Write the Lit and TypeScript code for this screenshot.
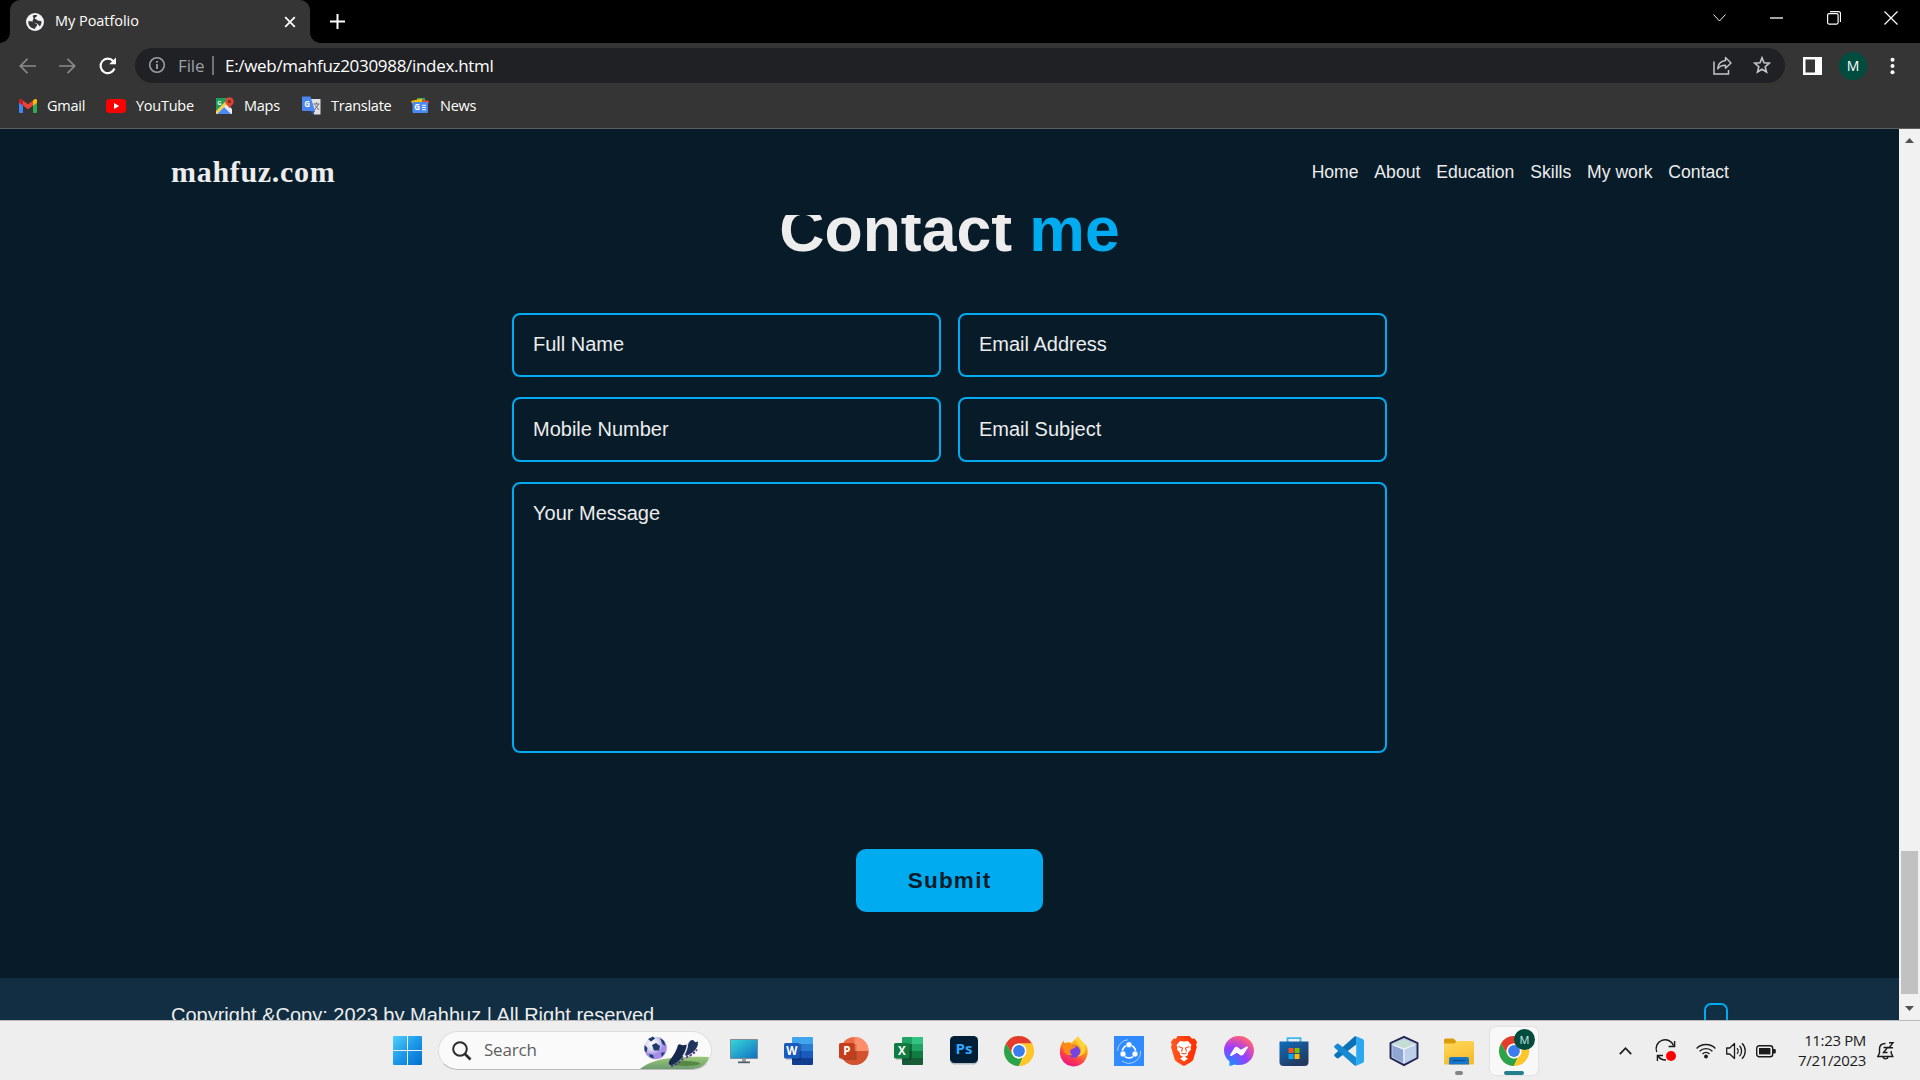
import { LitElement, html, css, svg } from "lit";
import { customElement } from "lit/decorators.js";

const chrome = svg`
  <circle cx="15" cy="15" r="15" fill="#ffcd40"/>
  <path d="M2 7.5A15 15 0 0 1 28 7.5H15A7.5 7.5 0 0 0 8.5 18.75Z" fill="#e33b2e"/>
  <path d="M2 7.5 8.5 18.75A7.5 7.5 0 0 0 18.5 21.6L14.8 30A15 15 0 0 1 2 7.5Z" fill="#2ba24c"/>
  <path d="M28 7.5A15 15 0 0 1 14.8 30L21.5 18.75A7.5 7.5 0 0 0 15 7.5Z" fill="#ffc629"/>
  <circle cx="15" cy="15" r="7.5" fill="#fff"/><circle cx="15" cy="15" r="5.9" fill="#3b7ded"/>`;

const office = (kind: string) => {
  const c = kind === "W"
    ? ["#41a5ee", "#2b7cd3", "#185abd", "#103f91", "#185abd"]
    : ["#21a366", "#21a366", "#107c41", "#185c37", "#107c41"];
  return svg`
    <path d="M9 1h19a1 1 0 0 1 1 1v6H8V2a1 1 0 0 1 1-1z" fill=${c[0]}/>
    <path d="M8 8h21v7H8z" fill=${c[1]}/><path d="M8 15h21v7H8z" fill=${c[2]}/>
    <path d="M8 22h21v6a1 1 0 0 1-1 1H9a1 1 0 0 1-1-1z" fill=${c[3]}/>
    ${kind === "X" ? svg`<path d="M18 1h10a1 1 0 0 1 1 1v6H18z" fill="#33c481"/><path d="M18 8h11v7H18z" fill="#21a366"/><path d="M8 8h10v7H8z" fill="#107c41"/><path d="M8 15h10v7H8z" fill="#185c37"/>` : ""}
    <rect x="2" y="8" width="15.5" height="16" fill="#000" opacity=".18"/>
    <rect x="0" y="7" width="15.5" height="15.5" rx="1.5" fill=${c[4]}/>
    <text x="7.8" y="19" text-anchor="middle" class="letter">${kind}</text>`;
};

const APPS: { id: string; art: unknown }[] = [
  { id: "monitor", art: svg`
    <defs><linearGradient id="mo" x2="1" y2="1"><stop stop-color="#35d6d6"/><stop offset="1" stop-color="#1272c4"/></linearGradient></defs>
    <rect x="1" y="3" width="28" height="20" rx="1" fill="#7e8c98"/><rect x="2" y="4" width="26" height="18" fill="url(#mo)"/>
    <path d="M13 23h4v3h-4z" fill="#9aa4ac"/><path d="M9 25.500h12v1.700H9z" fill="#4e5a64"/>` },
  { id: "word", art: office("W") },
  { id: "powerpoint", art: svg`
    <circle cx="15.500" cy="15" r="14" fill="#ed6c47"/><path d="M15.500 1a14 14 0 0 1 14 14h-14z" fill="#ff8f6b"/>
    <path d="M1.500 15h28a14 14 0 0 1-28 0z" fill="#d35230"/><rect x="2" y="8" width="15.500" height="16" fill="#000" opacity=".18"/>
    <rect x="0" y="7" width="15.500" height="15.500" rx="1.500" fill="#c43e1c"/><text x="7.800" y="19" text-anchor="middle" class="letter">P</text>` },
  { id: "excel", art: office("X") },
  { id: "photoshop", art: svg`
    <rect x="1" y="0.500" width="28" height="28" rx="4.500" fill="#b4b9bd"/><rect x="1" y="0" width="28" height="27" rx="4.500" fill="#001e36"/>
    <text x="15" y="18" text-anchor="middle" class="ps">Ps</text>` },
  { id: "chrome", art: chrome },
  { id: "firefox", art: svg`
    <defs><linearGradient id="ff" x1=".8" x2=".3" y2="1"><stop stop-color="#fff44f"/><stop offset=".4" stop-color="#ff980e"/><stop offset=".75" stop-color="#ff3750"/><stop offset="1" stop-color="#e31587"/></linearGradient></defs>
    <path d="M19 0c1 3 5 5 6.500 8 1 1 1.500 1.500 2 1 1.500 4 2 8 0 12.500A13.700 13.700 0 0 1 1 18C.5 12 2 8 4.500 4.500c.5 2 1 2.500 1.500 2.500 3-1 5-1 7 0C14 4 17 3 19 0z" fill="url(#ff)"/>
    <circle cx="14.800" cy="15.500" r="6.300" fill="#7542e5"/>
    <path d="M2 9c3-2.500 7-2.500 10 0 2 1 4 .5 5 1.500-1 2-4 2-5.500 3.500-1 2 0 4 2 5-4 1-8-1-9-5C4 12 3 10 2 9z" fill="#ff8b16"/>
    <path d="M19 0c-2 4-1 7 1.500 9.500 3 4 2 9-2.500 11 6-.5 9-4 8-9C25 6 20 4 19 0z" fill="#ffd43a"/>` },
  { id: "shareit", art: svg`
    <path d="M0 0h30v30H0z" fill="#318bff"/><g fill="none" stroke="#fff" stroke-width="1.600"><circle cx="15" cy="15.500" r="6.500"/>
    <path d="M3.500 15A11.500 11.500 0 0 1 14 3.700M26.500 15A11.500 11.500 0 0 1 8 24.800" stroke="#a9d1ff" stroke-width="1"/></g>
    <g fill="#fff" stroke="#318bff" stroke-width=".6"><circle cx="15" cy="8.700" r="3"/><circle cx="9" cy="18" r="3"/><circle cx="21" cy="18" r="3"/></g>` },
  { id: "brave", art: svg`
    <defs><linearGradient id="br" x2="1"><stop stop-color="#ff5a22"/><stop offset="1" stop-color="#ff2a00"/></linearGradient></defs>
    <path d="M8.500 0h12l2.500 2.800 2.500-.3 2.500 3.500-.9 3 .7 2-3.500 12.500c-.5 1.800-5.500 4.500-9.300 6.500-3.800-2-8.800-4.700-9.300-6.500L2 11l.7-2L2 6l2.500-3.500 2.500.3z" fill="url(#br)"/>
    <path d="M15 5.500l4-.5 3.500 4-1 2.500.5 2-3 3.500v2l-4 2.500-4-2.500v-2l-3-3.500.5-2-1-2.500L11 5z" fill="#fff"/>
    <path d="M9.500 10.500l4 1.500-1 3.500M20.500 10.500l-4 1.500 1 3.500M12.500 17l2.500 1 2.500-1" stroke="#ff4a17" stroke-width="1.100" fill="none"/>
    <path d="M11 22.500l4-2 4 2-4 3z" fill="#fff"/>` },
  { id: "messenger", art: svg`
    <defs><radialGradient id="ms" cx=".19" cy=".99" r="1.100"><stop stop-color="#0a95ff"/><stop offset=".55" stop-color="#9b3cff"/><stop offset=".9" stop-color="#f5588c"/><stop offset="1" stop-color="#ff7061"/></radialGradient></defs>
    <path d="M15 0c8.500 0 15 6.200 15 14.500S23.500 29 15 29c-1.500 0-3-.2-4.300-.6L5.500 30v-4.700C2 22.700 0 19 0 14.500 0 6.200 6.500 0 15 0z" fill="url(#ms)"/>
    <path d="M6.200 18.800l4.300-7c.8-1.200 2.200-1.300 3.200-.6l3.300 2.500 5.600-3.200c.8-.4 1.600.4 1.200 1.200l-4.300 6.800c-.8 1.200-2.200 1.400-3.200.7l-3.400-2.500-5.500 3.300c-.8.400-1.600-.4-1.200-1.200z" fill="#fff"/>` },
  { id: "store", art: svg`
    <defs><linearGradient id="st" x2=".6" y2="1"><stop stop-color="#0f6cbd"/><stop offset="1" stop-color="#23395d"/></linearGradient></defs>
    <path d="M8.500 6.500V2.200h13v4.300" fill="none" stroke="#3cb8f0" stroke-width="1.800"/>
    <path d="M.5 5.500h29V26a4 4 0 0 1-4 4h-21a4 4 0 0 1-4-4z" fill="url(#st)"/>
    <path d="M9.500 12h5v5h-5z" fill="#f35325"/><path d="M15.500 12h5v5h-5z" fill="#81bc06"/><path d="M9.500 18h5v5h-5z" fill="#05a6f0"/><path d="M15.500 18h5v5h-5z" fill="#ffba08"/>` },
  { id: "vscode", art: svg`
    <path d="M22.200.2L29 3.300c.6.300 1 .9 1 1.600v20.200c0 .7-.4 1.300-1 1.600l-6.800 3.100z" fill="#2aa8f2"/>
    <path d="M22.200.2v8.300L4.400 22.200a1.300 1.300 0 0 1-1.700-.1L.6 20.200a1.300 1.300 0 0 1 0-1.900L20.500.600z" fill="#0b72b5"/>
    <path d="M22.200 29.800v-8.300L4.400 7.800a1.300 1.300 0 0 0-1.700.1L.6 9.800a1.300 1.300 0 0 0 0 1.900l19.900 17.700z" fill="#1589d1"/>` },
  { id: "virtualbox", art: svg`
    <path d="M15 .8L28.500 7v15L15 29.200 1.500 22V7z" fill="#b7cbe6" stroke="#22224f" stroke-width="1.900" stroke-linejoin="round"/>
    <path d="M15 3l11 5-11 4.500L4 8z" fill="#c5dcd5"/><path d="M3.500 9.500l10.700 4.200v12.800L3.500 21z" fill="#8fa6d3"/>
    <path d="M26.500 9.500l-10.700 4.200v12.800L26.500 21z" fill="#bccfe9"/><path d="M4 8.500l11 4.700 11-4.700M15 13v14" fill="none" stroke="#eef4fb" stroke-width="1.300"/>` },
  { id: "folder", art: svg`
    <defs><linearGradient id="fo" x2=".4" y2="1"><stop stop-color="#ffda5e"/><stop offset="1" stop-color="#f8bb2c"/></linearGradient></defs>
    <path d="M0 4a1.500 1.500 0 0 1 1.500-1.500h8L12.500 5.500H28v6H0z" fill="#d99c0b"/>
    <path d="M0 7.500h10.500L13 5h15.500A1.500 1.500 0 0 1 30 6.500v21a1 1 0 0 1-1 1H1a1 1 0 0 1-1-1z" fill="url(#fo)"/>
    <path d="M5 28.500v-5.500A2 2 0 0 1 7 21h16a2 2 0 0 1 2 2v5.500z" fill="#1577c9"/><path d="M8.500 24.500h13" stroke="#0c4f92" stroke-width="1.400"/>` },
];

const NAV = ["Home", "About", "Education", "Skills", "My work", "Contact"];

@customElement("browser-chrome")
class BrowserChrome extends LitElement {
  static styles = css`
    :host { display: block; font-family: "Open Sans", "Noto Sans", sans-serif; color: #fff; }
    svg { display: block; flex: none; }
    .strip { height: 43px; background: #000; display: flex; align-items: flex-end; padding: 0 1px 0 10px; }
    .tab { position: relative; box-sizing: border-box; width: 300px; height: 43px; background: #353535; border-radius: 10px 10px 0 0; display: flex; align-items: center; padding: 0 14px 0 16px; }
    .tab::before, .tab::after { content: ""; position: absolute; bottom: 0; width: 10px; height: 10px; }
    .tab::before { left: -10px; background: radial-gradient(circle at 0 0, transparent 9.5px, #353535 10px); }
    .tab::after { right: -10px; background: radial-gradient(circle at 100% 0, transparent 9.5px, #353535 10px); }
    .title { margin-left: 11px; font-size: 14.5px; flex: 1; letter-spacing: -.04px; line-height: 40px; height: 42px; }
    .plus { margin: 0 0 14px 20px; }
    .spacer { flex: 1; }
    .win { display: flex; align-items: center; height: 36px; align-self: flex-start; }
    .win span { width: 57px; display: flex; justify-content: center; }
    .bar { height: 45px; background: #353535; display: flex; align-items: center; padding-right: 18px; box-sizing: border-box; }
    .omni { height: 35px; width: 1650px; border-radius: 18px; background: #202124; display: flex; align-items: center; font-size: 17px; box-sizing: border-box; padding: 0 13px 0 13px; margin-top: -1px; }
    .file { color: #9aa0a6; margin-left: 12px; width: 34px; letter-spacing: -.1px; }
    .sep { width: 2px; height: 19px; background: #6f7377; margin-right: 11px; }
    .url { letter-spacing: -.31px; }
    .avatar { width: 28px; height: 28px; border-radius: 50%; background: #004d40; font-size: 14px; display: grid; place-items: center; margin: 0 23px 0 17px; }
    .marks { height: 40px; background: #353535; border-bottom: 1px solid #5e5e5e; display: flex; font-size: 14.5px; letter-spacing: -.26px; padding-left: 19px; }
    .mark { display: flex; align-items: center; height: 35px; gap: 10px; }
    .nav { display: flex; gap: 20px; padding: 0 16px 0 19px; }
  `;
  render() {
    return html`
      <div class="strip">
        <div class="tab">
          <svg width="18" height="18" viewBox="0 0 18 18"><circle cx="9" cy="9" r="9" fill="#f1f3f4"/><path d="M2.300 8.300c2-.3 4.700 0 5.700 1.200 1 1 2.500 1 3.200 2 .3 1.500-1.500 1.800-1.700 3.200l-.8 1.200C5 15.500 2 12.500 2.300 8.300zM7 2.600c1.700-.6 3-.6 4.200-.2-.4 1.600-2.200 1.400-2.400 2.800.2 1.200 2 .8 2.600 2 .8.800 2.600.3 4 1 .3 2-.6 4-1.800 5.200-.4-1.700-1.800-2.200-2.700-3-1.300-1-3.300-.4-4.200-2C6 6.800 7.800 6.300 7.600 5.200 7.200 4.400 6.500 3.600 7 2.600z" fill="#353535"/></svg>
          <div class="title">My Poatfolio</div>
          <svg width="12" height="12" viewBox="0 0 12 12"><path d="M1.200 1.200l9.600 9.600M10.800 1.200l-9.600 9.600" stroke="#fff" stroke-width="1.800"/></svg>
        </div>
        <svg class="plus" width="15" height="15" viewBox="0 0 15 15"><path d="M7.500 0v15M0 7.500h15" stroke="#fff" stroke-width="2"/></svg>
        <div class="spacer"></div>
        <div class="win">
          <span><svg width="13" height="8" viewBox="0 0 13 8"><path d="M.5.500l6 6.500 6-6.500" fill="none" stroke="#eee"/></svg></span>
          <span><svg width="13" height="2" viewBox="0 0 13 2"><path d="M0 1h13" stroke="#fff" stroke-width="1.300"/></svg></span>
          <span><svg width="14" height="14" viewBox="0 0 14 14"><rect x=".6" y="2.600" width="10.500" height="10.500" rx="1.500" fill="none" stroke="#fff" stroke-width="1.200"/><path d="M3 .6h8.500a2 2 0 0 1 2 2V11" fill="none" stroke="#fff" stroke-width="1.200"/></svg></span>
          <span><svg width="14" height="14" viewBox="0 0 14 14"><path d="M.5.500l13 13M13.500.500l-13 13" stroke="#fff" stroke-width="1.200"/></svg></span>
        </div>
      </div>
      <div class="bar">
        <div class="nav">
          <svg width="17" height="16" viewBox="0 0 17 16"><path d="M17 8H1.500M8.500.8L1.300 8l7.200 7.200" fill="none" stroke="#8a8a8a" stroke-width="1.700"/></svg>
          <svg width="17" height="16" viewBox="0 0 17 16" style="margin-left:3px"><path d="M0 8h15.500M8.500.8L15.700 8l-7.200 7.200" fill="none" stroke="#8a8a8a" stroke-width="1.700"/></svg>
          <svg width="20" height="16" viewBox="0 0 20 16" overflow="visible" style="margin-left:3px"><path d="M14.300 3.200A7.200 7.200 0 1 0 15.500 10.500" fill="none" stroke="#fff" stroke-width="2.100"/><path d="M17-.5v6.800h-6.800z" fill="#fff"/></svg>
        </div>
        <div class="omni">
          <svg width="18" height="18" viewBox="0 0 18 18"><circle cx="9" cy="9" r="7.300" fill="none" stroke="#9aa0a6" stroke-width="1.600"/><path d="M9 8v5M9 5v1.800" stroke="#9aa0a6" stroke-width="1.800"/></svg>
          <span class="file">File</span><span class="sep"></span><span class="url">E:/web/mahfuz2030988/index.html</span>
          <span class="spacer"></span>
          <svg width="19" height="19" viewBox="0 0 19 19"><path d="M1 5.500V18h14.500v-4" fill="none" stroke="#c4c7c9" stroke-width="1.500"/><path d="M12.500 1.500L18 7l-5.500 5.200V9.300c-4 0-6 1-7.700 3.500.2-4.500 3-7.800 7.700-8.300z" fill="none" stroke="#c4c7c9" stroke-width="1.400" stroke-linejoin="round"/></svg>
          <svg width="18" height="18" viewBox="0 0 18 18" style="margin-left:21px;margin-right:1px"><path d="M9 1.800l2 5 5.300.4-4.100 3.500 1.300 5.300L9 13.200 4.500 16l1.300-5.300L1.700 7.200 7 6.800z" fill="none" stroke="#c4c7c9" stroke-width="1.600"/></svg>
        </div>
        <svg width="19" height="18" viewBox="0 0 19 18" style="margin-left:18px"><path fill="#fff" fill-rule="evenodd" d="M0 0h19v18H0zM2.500 2.500v13H12v-13z"/></svg>
        <div class="avatar">M</div>
        <svg width="5" height="18" viewBox="0 0 5 18"><g fill="#fff"><circle cx="2.500" cy="2.800" r="2"/><circle cx="2.500" cy="9" r="2"/><circle cx="2.500" cy="15.200" r="2"/></g></svg>
      </div>
      <div class="marks">
        <div class="mark" style="width:87px"><svg width="18" height="14" viewBox="0 0 18 14"><path d="M0 2v11a1 1 0 0 0 1 1h3V5z" fill="#4285f4"/><path d="M18 2v11a1 1 0 0 1-1 1h-3V5z" fill="#34a853"/><path d="M0 1.500C0 0 1.500-.3 2.800.5L4 1.500v5L0 3.700z" fill="#c5221f"/><path d="M18 1.500c0-1.500-1.500-1.800-2.800-1L14 1.500v5l4-2.800z" fill="#fbbc04"/><path d="M4 1.500l5 3.800 5-3.800v5l-5 3.800-5-3.800z" fill="#ea4335"/></svg>Gmail</div>
        <div class="mark" style="width:110px"><svg width="20" height="14" viewBox="0 0 20 14"><rect width="20" height="14" rx="3.500" fill="#f00"/><path d="M8 4l5.200 3L8 10z" fill="#fff"/></svg>YouTube</div>
        <div class="mark" style="width:86px"><svg width="18" height="18" viewBox="0 0 18 18"><path d="M0 1h12v7l4 4v5H0z" fill="#e8eaed"/><path d="M0 1h11l-2 7-9 9z" fill="#1e9e58"/><path d="M1 17l7-7 7 7z" fill="#4a8af4"/><path d="M0 14L10 4l2 2L1 17H0z" fill="#fcd04b"/><path d="M13.500.2A4.200 4.200 0 0 1 17.700 4.500c0 3.500-3.400 4-4.200 7-.8-3-4.200-3.500-4.200-7A4.200 4.200 0 0 1 13.500.2z" fill="#db4437"/><circle cx="13.500" cy="4.500" r="1.500" fill="#7b231e"/><text x="1.200" y="7.500" font-size="6" font-weight="700" fill="#fff">G</text></svg>Maps</div>
        <div class="mark" style="width:109px"><svg width="19" height="19" viewBox="0 0 19 19"><path d="M8 3h10.500v15.500H12z" fill="#dfe1e5"/><path d="M0 .5h8.500L13 15H1a1 1 0 0 1-1-1z" fill="#4a86ee"/><path d="M8.500 15H13l-2 3.500z" fill="#2b57b0"/><path d="M11.500 8h6M14.500 6.500V8M12.500 14l4-5.500M13 9.500l4 4.500" stroke="#666" fill="none"/><text x="2.300" y="10.500" font-size="8" font-weight="700" fill="#fff">G</text></svg>Translate</div>
        <div class="mark"><svg width="19" height="17" viewBox="0 0 19 17"><path d="M6 1h8v5H6z" fill="#34a853"/><path d="M0 4l11-2.500V8H2z" fill="#fbbc04"/><path d="M18 4l-6-1.500V8h5z" fill="#ea4335"/><rect x="1.500" y="5" width="15.500" height="11" rx="1" fill="#4a8af4"/><path d="M11 8.300h4M11 10.500h4M11 12.700h4" stroke="#fff"/><text x="3.300" y="13.300" font-size="8" font-weight="700" fill="#fff">G</text></svg>News</div>
      </div>`;
  }
}

@customElement("contact-page")
class ContactPage extends LitElement {
  static styles = css`
    :host { display: flex; height: 891px; overflow: hidden; background: #081b29; color: #ededed; font-family: "Liberation Sans", Arial, sans-serif; }
    .page { width: 1899px; display: flex; flex-direction: column; }
    .header { height: 86px; flex: none; box-sizing: border-box; padding: 0 170px 0 171px; display: flex; justify-content: space-between; align-items: center; background: #081b29; z-index: 1; }
    .logo { font: 700 30px "Liberation Serif", "Times New Roman", serif; letter-spacing: .7px; }
    .links { display: flex; gap: 15.8px; font-size: 17.6px; line-height: 20px; margin-top: -1px; }
    h2 { margin: -21px 0 0; font-size: 62.5px; line-height: 70px; height: 70px; text-align: center; flex: none; }
    h2 span { color: #00abf0; }
    .form { width: 875px; align-self: center; display: grid; grid-template-columns: 429px 429px; column-gap: 17px; row-gap: 20px; grid-template-rows: 64px 65px 271px; margin-top: 49px; flex: none; }
    .field { border: 2px solid #00abf0; border-radius: 8px; padding: 17px 19px; font-size: 20px; line-height: 24px; box-sizing: border-box; }
    .row2 { padding-top: 18px; }
    .wide { grid-column: span 2; }
    .submit { align-self: center; width: 187px; height: 63px; flex: none; margin-top: 96px; border-radius: 10px; background: #00abf0; color: #081b29; font-size: 22.5px; font-weight: 700; letter-spacing: 1.25px; line-height: 63px; text-align: center; }
    .footer { margin-top: 66px; height: 80px; flex: none; background: #112e42; padding: 25px 171px 0; display: flex; justify-content: space-between; font-size: 20px; line-height: 24px; }
    .top { width: 24px; height: 34px; box-sizing: border-box; border: 2px solid #00abf0; border-radius: 7px; }
    .scroll { width: 21px; background: #f1f1f1; display: flex; flex-direction: column; align-items: center; box-sizing: border-box; padding: 9px 0; }
    .thumb { width: 17px; height: 143px; background: #c1c1c1; margin: auto 0 12px; }
  `;
  render() {
    return html`
      <div class="page">
        <div class="header"><div class="logo">mahfuz.com</div><div class="links">${NAV.map((n) => html`<span>${n}</span>`)}</div></div>
        <h2>Contact <span>me</span></h2>
        <div class="form">
          <div class="field">Full Name</div><div class="field">Email Address</div>
          <div class="field row2">Mobile Number</div><div class="field row2">Email Subject</div>
          <div class="field wide">Your Message</div>
        </div>
        <div class="submit">Submit</div>
        <div class="footer"><span>Copyright &amp;Copy; 2023 by Mahhuz | All Right reserved</span><span class="top"></span></div>
      </div>
      <div class="scroll">
        <svg width="9" height="5" viewBox="0 0 9 5"><path d="M0 5L4.500 0 9 5z" fill="#505050"/></svg>
        <div class="thumb"></div>
        <svg width="9" height="5" viewBox="0 0 9 5"><path d="M0 0l4.500 5L9 0z" fill="#505050"/></svg>
      </div>`;
  }
}

@customElement("task-bar")
class TaskBar extends LitElement {
  static styles = css`
    :host { display: flex; height: 60px; box-sizing: border-box; border-top: 1px solid #bababa; background: #eee; padding: 0 26px 0 393px; align-items: center; font-family: "Open Sans", "Noto Sans", sans-serif; color: #1b1b1b; }
    svg { display: block; flex: none; overflow: visible; }
    .search { width: 274px; height: 39px; box-sizing: border-box; border: 1px solid #dedede; border-bottom-color: #bbb; border-radius: 20px; background: #fafafa; margin: -1px 4px 0 16px; display: flex; align-items: center; padding-left: 13px; overflow: hidden; font-size: 17px; letter-spacing: -.2px; color: #5f5f5f; }
    .search .label { margin-left: 13px; width: 156px; flex: none; line-height: 22px; }
    .apps { display: flex; }
    .app { width: 55px; height: 59px; display: flex; align-items: center; justify-content: center; position: relative; }
    .tile { width: 48px; height: 48px; background: #f8f8f8; border-radius: 6px; box-shadow: 0 0 1px 1px #e2e2e2; display: flex; align-items: center; justify-content: center; }
    .dot { position: absolute; bottom: 5px; height: 4px; border-radius: 2px; background: #858585; width: 8px; }
    .dot.on { width: 20px; background: #23808d; bottom: 5px; }
    .badge { position: absolute; left: 28px; top: 8px; width: 21px; height: 21px; border-radius: 50%; background: #004d40; color: #d5e3e0; font-size: 11px; display: grid; place-items: center; }
    .letter { font: 700 11.500px "Open Sans", sans-serif; fill: #fff; }
    .ps { font: 700 15px "Open Sans", sans-serif; fill: #31a8ff; }
    .tray { margin-left: auto; display: flex; align-items: center; }
    .clock { width: 80px; text-align: right; font-size: 15px; line-height: 20px; letter-spacing: -.35px; margin: -1px 11px 0 10px; white-space: nowrap; }
  `;
  render() {
    return html`
      <svg width="29" height="29" viewBox="0 0 29 29"><defs><linearGradient id="w" x2="1" y2="1"><stop stop-color="#4fd0fc"/><stop offset=".5" stop-color="#1c98e8"/><stop offset="1" stop-color="#006fd0"/></linearGradient></defs><path fill="url(#w)" d="M0 1q0-1 1-1h13v14H0zM15 0h13q1 0 1 1v13H15zM0 15h14v14H1q-1 0-1-1zM15 15h14v13q0 1-1 1H15z"/></svg>
      <div class="search">
        <svg width="19" height="19" viewBox="0 0 19 19"><circle cx="8" cy="8" r="6.800" fill="none" stroke="#2b2b2b" stroke-width="2"/><path d="M13 13l5.500 5.500" stroke="#2b2b2b" stroke-width="2.600"/></svg>
        <span class="label">Search</span>
        <svg width="70" height="37" viewBox="0 0 70 37">
          <defs><linearGradient id="gr" x2="0" y2="1"><stop stop-color="#9cc878"/><stop offset="1" stop-color="#6c9d6f"/></linearGradient><radialGradient id="ba" cx=".35" cy=".3"><stop stop-color="#fff"/><stop offset=".6" stop-color="#d7d8ec"/><stop offset="1" stop-color="#a58de8"/></radialGradient></defs>
          <path d="M0 37C14 26 34 24 69 25q-2 12-14 12z" fill="url(#gr)"/><ellipse cx="45" cy="31.500" rx="15" ry="2.600" fill="#568743"/>
          <circle cx="15.500" cy="16" r="11.300" fill="url(#ba)"/>
          <g fill="#1d3c6e"><path d="M12 13l4-2 4 3-1 4.500h-5z"/><path d="M8 7l5-2.500 2 2-4 3zM20 6l4 3 1.500 5-3-2zM4.500 13l3 3-1 4.500-2-2zM9 22l4 1 1 3.500-4-1.500zM21 21l4-1-3 5z"/></g>
          <path d="M50.500 8.500q3-1.500 4 1 2 1.500 3-.500 1.500 4-2 8.500c-2 3-6 5-9 6.500-2-.5-1.500-3-.500-5.500 1-3.500 2-8 4.500-10z" fill="#1f3560"/>
          <path d="M38 13q1.500-1.500 3.500 0 3 .500 5-.500l1.500 3c-1 4-3.500 8-6.500 11-3 2.500-7 5.500-10 6.500-3 0-3.500-2-1.500-5 3-4 6-8 8-15z" fill="#17284f"/>
          <path d="M47.500 11.500c0 4-2 9-4.500 13" fill="none" stroke="#dfe0ee" stroke-width="1.500"/>
          <path d="M31 34c5-1 9-4 13-8M46 25.500c4-1.500 8-4 11-8" fill="none" stroke="#59379a" stroke-width="1.800" stroke-dasharray="2.500 1.500"/>
        </svg>
      </div>
      <div class="apps">
        ${APPS.map((a) => html`<div class="app"><svg width="30" height="30" viewBox="0 0 30 30">${a.art}</svg>${a.id === "folder" ? html`<i class="dot"></i>` : ""}</div>`)}
        <div class="app"><div class="tile"><svg width="30" height="30" viewBox="0 0 30 30">${chrome}</svg></div><i class="dot on"></i><span class="badge">M</span></div>
      </div>
      <div class="tray">
        <svg width="13" height="8" viewBox="0 0 13 8"><path d="M.8 7.200l5.700-6 5.700 6" fill="none" stroke="#1b1b1b" stroke-width="1.700"/></svg>
        <svg width="20" height="20" viewBox="0 0 20 20" style="margin-left:24px"><path d="M.7 11A9 9 0 0 1 17.500 4.500M18.600 0v5.500h-6M1.400 20v-5.500H7M2 15a9 9 0 0 0 8 4" fill="none" stroke="#1b1b1b" stroke-width="1.400"/><circle cx="15" cy="15" r="5" fill="#f00"/></svg>
        <svg width="20" height="16" viewBox="0 0 20 16" style="margin-left:20px"><g fill="none" stroke="#1b1b1b" stroke-width="1.400"><path d="M.6 5.500a13.200 13.200 0 0 1 18.800 0"/><path d="M3.600 8.300a9 9 0 0 1 12.800 0" /><path d="M6.500 11a5 5 0 0 1 7 0"/></g><circle cx="10" cy="13.500" r="1.900" fill="#1b1b1b"/></svg>
        <svg width="20" height="18" viewBox="0 0 20 18" style="margin-left:10px"><g fill="none" stroke="#1b1b1b" stroke-width="1.300" stroke-linejoin="round"><path d="M.7 6h3L8.500 1.500v15L3.700 12h-3z"/><path d="M11 6.200a4 4 0 0 1 0 5.600M13.500 3.800a7.500 7.500 0 0 1 0 10.400M16 1.200a11 11 0 0 1 0 15.600"/></g></svg>
        <svg width="20" height="12" viewBox="0 0 20 12" style="margin-left:10px"><rect x=".7" y=".7" width="16" height="11" rx="2.500" fill="none" stroke="#1b1b1b" stroke-width="1.400"/><rect x="3" y="3" width="11.400" height="6.400" fill="#1b1b1b"/><path d="M17 4h1.500q1.300 0 1.300 1v2.400q0 1-1.300 1H17z" fill="#1b1b1b"/></svg>
        <div class="clock">11:23 PM<br>7/21/2023</div>
        <svg width="17" height="19" viewBox="0 0 17 19"><path d="M8.500 2.500C4.500 2.500 2.500 5 2.500 8v4L.8 15.500h15l-1.600-3.500v-2M6 16a2.600 2.600 0 0 0 5 0" fill="none" stroke="#1b1b1b" stroke-width="1.400"/><path d="M6.500 6.500h4l-4 5h4M12 1.700h4l-4 5h4" fill="none" stroke="#1b1b1b" stroke-width="1.400"/></svg>
      </div>`;
  }
}

@customElement("app-root")
class AppRoot extends LitElement {
  static styles = css`:host { display: block; width: 1920px; height: 1080px; overflow: hidden; }`;
  render() {
    return html`<browser-chrome></browser-chrome><contact-page></contact-page><task-bar></task-bar>`;
  }
}
